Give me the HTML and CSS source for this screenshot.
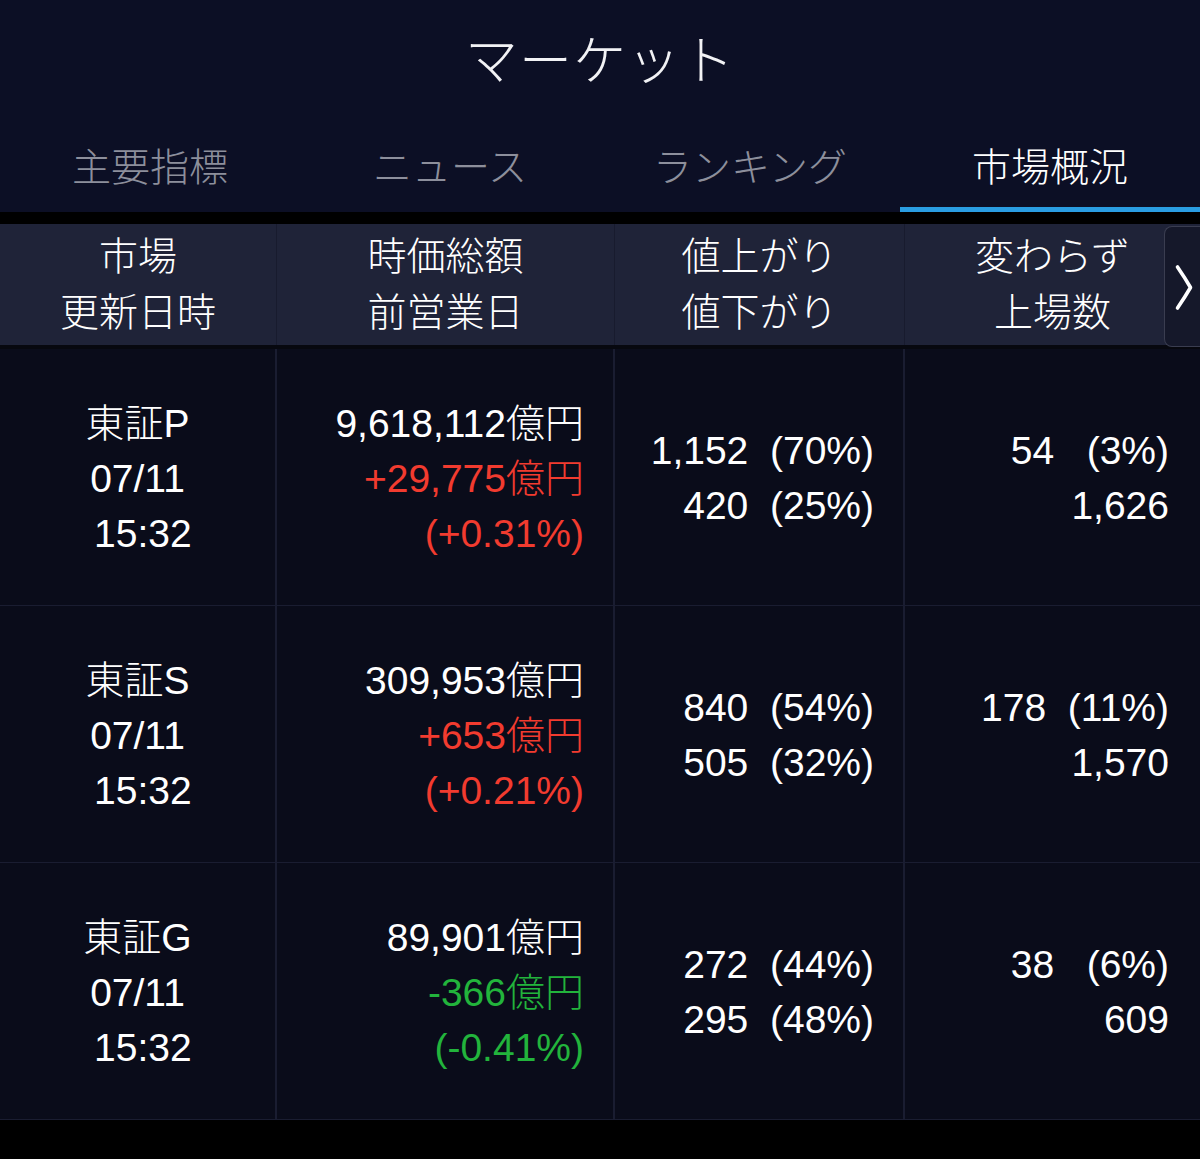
FILE: index.html
```html
<!DOCTYPE html>
<html lang="ja">
<head>
<meta charset="utf-8">
<title>マーケット</title>
<link rel="stylesheet" href="styles.css">
</head>
<body>
<header class="top">
  <h1 class="title">マーケット</h1>
  <nav class="tabs">
    <div class="tab">主要指標</div>
    <div class="tab">ニュース</div>
    <div class="tab">ランキング</div>
    <div class="tab active">市場概況</div>
  </nav>
</header>
<div class="gap"></div>
<section class="table">
  <div class="thead">
    <div class="th c1">市場<br>更新日時</div>
    <div class="th c2">時価総額<br>前営業日</div>
    <div class="th c3">値上がり<br>値下がり</div>
    <div class="th c4">変わらず<br>上場数</div>
    <button class="more" aria-label="次へ">
      <svg width="35" height="120" viewBox="0 0 35 120"><path d="M12.5 40 Q20 51 25.5 60.5 Q20 70 12.5 81" fill="none" stroke="#ffffff" stroke-width="3.6" stroke-linecap="round" stroke-linejoin="round"/></svg>
    </button>
  </div>
  <div class="row">
    <div class="td c1">東証P<br>07/11<br> 15:32</div>
    <div class="td c2">9,618,112億円<br><span class="up">+29,775億円<br>(+0.31%)</span></div>
    <div class="td c3">1,152  (70%)<br>420  (25%)</div>
    <div class="td c4">54   (3%)<br>1,626</div>
  </div>
  <div class="row">
    <div class="td c1">東証S<br>07/11<br> 15:32</div>
    <div class="td c2">309,953億円<br><span class="up">+653億円<br>(+0.21%)</span></div>
    <div class="td c3">840  (54%)<br>505  (32%)</div>
    <div class="td c4">178  (11%)<br>1,570</div>
  </div>
  <div class="row">
    <div class="td c1">東証G<br>07/11<br> 15:32</div>
    <div class="td c2">89,901億円<br><span class="down">-366億円<br>(-0.41%)</span></div>
    <div class="td c3">272  (44%)<br>295  (48%)</div>
    <div class="td c4">38   (6%)<br>609</div>
  </div>
</section>
</body>
</html>
```

FILE: styles.css
```css
html, body {
  margin: 0;
  padding: 0;
}
body {
  background: #000000;
  color: #ffffff;
  font-family: "Liberation Sans", "Noto Sans CJK JP", sans-serif;
  font-weight: 300;
  width: 1200px;
  height: 1159px;
  overflow: hidden;
}
.top {
  background: #0c0f25;
}
.title {
  margin: 0;
  padding-top: 3px;
  height: 117px;
  line-height: 117px;
  text-align: center;
  font-size: 53px;
  font-weight: 300;
  letter-spacing: 1px;
  color: #f2f2f5;
}
.tabs {
  display: grid;
  grid-template-columns: repeat(4, 1fr);
}
.tab {
  padding-top: 24px;
  padding-bottom: 15px;
  line-height: 48px;
  font-size: 39px;
  text-align: center;
  color: #8d8f9c;
  border-bottom: 5px solid transparent;
}
.tab.active {
  color: #ffffff;
  border-bottom-color: #2a9de2;
}
.gap {
  height: 12px;
  background: #000000;
}
.table {
  display: flex;
  flex-direction: column;
}
.thead {
  position: relative;
  display: grid;
  grid-template-columns: 277px 338px 290px 295px;
  height: 121px;
  background: #1f2338;
  border-bottom: 4px solid #07080f;
}
.th {
  display: flex;
  align-items: center;
  justify-content: center;
  text-align: center;
  font-size: 39px;
  line-height: 56px;
  border-right: 1px solid #181b2e;
}
.th.c4 {
  border-right: none;
}
.more {
  position: absolute;
  right: 0;
  top: 2px;
  width: 36px;
  height: 121px;
  padding: 0;
  margin: 0;
  background: #15182a;
  border: 1px solid #3a3d50;
  border-right: none;
  border-radius: 8px 0 0 8px;
  display: flex;
  align-items: center;
  justify-content: center;
}
.row {
  display: grid;
  grid-template-columns: 277px 338px 290px 295px;
  height: 257px;
  background: #0a0c1a;
  border-bottom: 1px solid #1a1d31;
  box-sizing: border-box;
}
.td {
  display: flex;
  flex-direction: column;
  justify-content: center;
  font-size: 39px;
  line-height: 55px;
  white-space: pre;
  border-right: 2px solid #1a1d31;
  padding-right: 32px;
  padding-top: 2px;
}
.td.c1 {
  text-align: center;
  padding-right: 0;
}
.td.c2, .td.c3, .td.c4 {
  text-align: right;
}
.td.c2 {
  padding-right: 29px;
}
.td.c3 {
  padding-right: 29px;
}
.td.c4 {
  border-right: none;
  padding-right: 31px;
}
.up {
  color: #f23b2f;
}
.down {
  color: #22b43c;
}
```
